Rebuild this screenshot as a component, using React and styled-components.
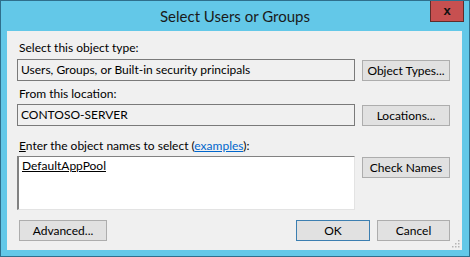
import React from 'react'
import styled, { createGlobalStyle } from 'styled-components'

const Global = createGlobalStyle`
  html, body { margin: 0; padding: 0; background: #63c8e8; }
  body { font-family: Lato, "Liberation Sans", sans-serif; }
`

const Window = styled.div`
  box-sizing: border-box;
  width: 470px;
  height: 257px;
  background: #63c8e8;
  border: 1px solid #2f6f8c;
  display: flex;
  flex-direction: column;
`

const TitleBar = styled.div`
  height: 30px;
  display: grid;
  grid-template-columns: 1fr auto 1fr;
  align-items: start;
`

const Title = styled.div`
  grid-column: 2;
  font-size: 15px;
  line-height: 30px;
  color: #1a1a1a;
`

const CloseButton = styled.div`
  grid-column: 3;
  justify-self: end;
  box-sizing: border-box;
  width: 34px;
  height: 21px;
  margin-right: 5px;
  background: #c75050;
  border: 1px solid #5e2d2b;
  border-top: none;
  display: flex;
  align-items: center;
  justify-content: center;
  font-family: "Liberation Sans", sans-serif;
  font-weight: bold;
  font-size: 13px;
  color: #111;
  padding-bottom: 2px;
`

const Panel = styled.div`
  position: relative;
  box-sizing: border-box;
  width: 455px;
  height: 219px;
  margin-left: 6px;
  background: #f0f0f0;
  padding: 10px 0 0 10px;
  display: flex;
  flex-direction: column;
  font-size: 12px;
  color: #000;
`

const Label = styled.div`
  height: 14px;
  line-height: 14px;
  margin-left: 2px;
  margin-top: ${p => p.$top || 0}px;
`

const Row = styled.div`
  display: flex;
  align-items: ${p => (p.$start ? 'flex-start' : 'center')};
  gap: 7px;
  margin-top: ${p => p.$top || 0}px;
`

const Field = styled.div`
  box-sizing: border-box;
  width: 338px;
  height: ${p => p.$h || 22}px;
  border: 1px solid #7a7a7a;
  background: ${p => (p.$white ? '#fff' : '#f0f0f0')};
  padding: ${p => (p.$white ? '2px 3px' : '0 3px')};
  line-height: ${p => (p.$white ? '14px' : '20px')};
  ${p => p.$white && 'border-color: #828282 #e3e3e3 #e3e3e3 #828282; border-width: 1px 1px 1px 2px;'}
`

const Button = styled.div`
  box-sizing: border-box;
  width: ${p => p.$w || 88}px;
  height: 21px;
  margin-top: ${p => p.$top || 0}px;
  background: #e1e1e1;
  border: 1px solid ${p => (p.$primary ? '#3c7fb1' : '#adadad')};
  display: flex;
  align-items: center;
  justify-content: center;
  color: #000;
`

const Underlined = styled.span`
  text-decoration: underline;
`

const Link = styled.span`
  color: #0066cc;
  text-decoration: underline;
`

const Footer = styled.div`
  display: flex;
  justify-content: space-between;
  margin-top: 10px;
  padding-left: 2px;
  width: 431px;
`

const Group = styled.div`
  display: flex;
  gap: 7px;
`

const Grip = styled.svg`
  position: absolute;
  right: 2px;
  bottom: 2px;
`

function App() {
  return (
    <>
      <Global />
      <Window>
        <TitleBar>
          <Title>Select Users or Groups</Title>
          <CloseButton>x</CloseButton>
        </TitleBar>
        <Panel>
          <Label>Select this object type:</Label>
          <Row $top={4}>
            <Field>Users, Groups, or Built-in security principals</Field>
            <Button>Object Types...</Button>
          </Row>
          <Label $top={6}>From this location:</Label>
          <Row $top={3}>
            <Field>CONTOSO-SERVER</Field>
            <Button>Locations...</Button>
          </Row>
          <Label $top={13}>
            <Underlined>E</Underlined>nter the object names to select (<Link>examples</Link>):
          </Label>
          <Row $top={3} $start>
            <Field $white $h={54}>
              <Underlined>DefaultAppPool</Underlined>
            </Field>
            <Button $top={1}>Check Names</Button>
          </Row>
          <Footer>
            <Button>Advanced...</Button>
            <Group>
              <Button $w={74} $primary>OK</Button>
              <Button $w={73}>Cancel</Button>
            </Group>
          </Footer>
          <Grip width="9" height="9" viewBox="0 0 9 9">
            {[[7, 1], [7, 4], [4, 4], [7, 7], [4, 7], [1, 7]].map(([x, y]) => (
              <rect key={x + '-' + y} x={x} y={y} width="1.5" height="1.5" fill="#b5b5b5" />
            ))}
          </Grip>
        </Panel>
      </Window>
    </>
  )
}

export default App
